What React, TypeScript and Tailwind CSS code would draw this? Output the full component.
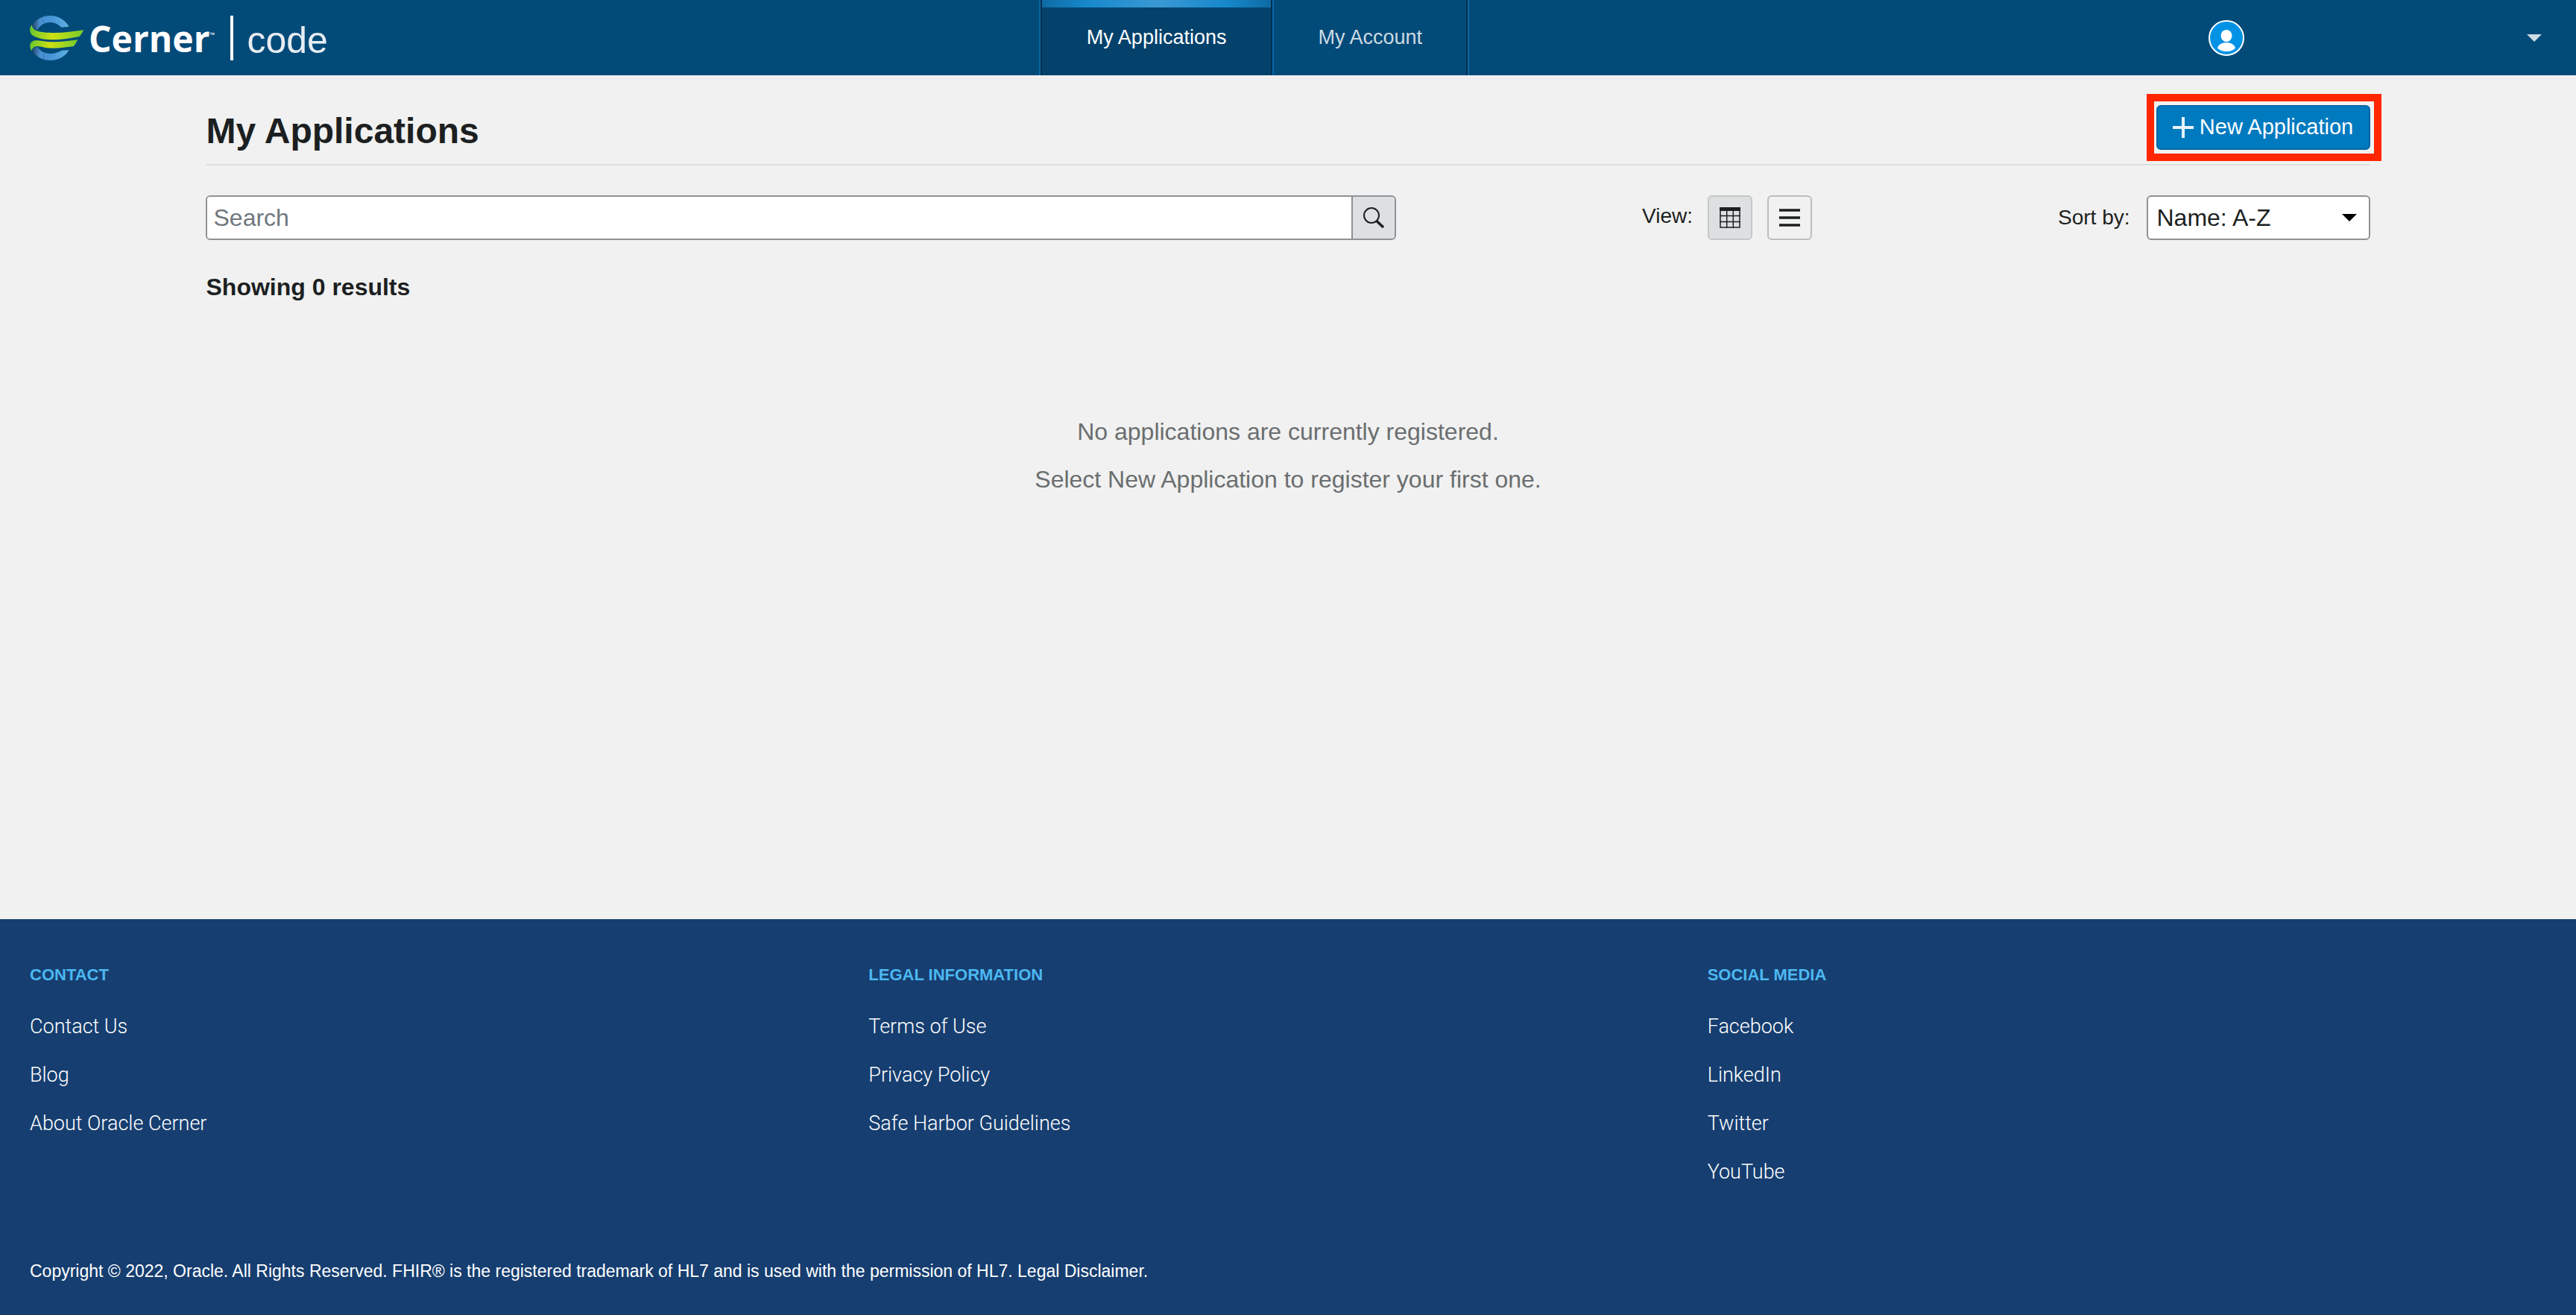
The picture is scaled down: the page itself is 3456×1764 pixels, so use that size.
import React from "react";

const footerColumns = [
  { title: "CONTACT", links: ["Contact Us", "Blog", "About Oracle Cerner"] },
  {
    title: "LEGAL INFORMATION",
    links: ["Terms of Use", "Privacy Policy", "Safe Harbor Guidelines"],
  },
  {
    title: "SOCIAL MEDIA",
    links: ["Facebook", "LinkedIn", "Twitter", "YouTube"],
  },
];

function Emblem() {
  return (
    <svg width="73" height="60" viewBox="0 0 73 60" aria-hidden="true">
      <defs>
        <linearGradient id="ring" x1="0" y1="0" x2="1" y2="0">
          <stop offset="0" stopColor="#1f3f66" />
          <stop offset="0.22" stopColor="#4a8fcf" />
          <stop offset="0.5" stopColor="#4595d9" />
          <stop offset="1" stopColor="#5fb0de" />
        </linearGradient>
        <linearGradient id="ribbon" x1="0" y1="0" x2="1" y2="0">
          <stop offset="0" stopColor="#6cc72f" />
          <stop offset="0.42" stopColor="#cfe112" />
          <stop offset="1" stopColor="#74c92c" />
        </linearGradient>
      </defs>
      <path
        d="M2.6 14C8 4.500 17 0 27.600 0C38 0 47.500 5.500 52.600 14.700L42.300 15.700C38.500 11.500 33 9 27 9C20 9 13.500 13 10 19.500Z"
        fill="url(#ring)"
      />
      <path
        d="M2.600 46C8 55.500 17 60 27.600 60C38 60 47.500 55 52.600 46.300L42.600 46.800C38.500 49.500 33 51 27 51C20 51 13.500 47.500 10 41.500Z"
        fill="url(#ring)"
      />
      <path
        d="M2.600 12.300C-0.500 16 -1.500 24 5 27.300C12 31 21 32.300 30 32.300C43 32.300 56 30 66.600 28Q70 24 72.300 19.200C58 21 45 23.300 30 23C19 22.800 9 21.500 5.500 18C3.500 16 2.800 14 2.600 12.300Z"
        fill="url(#ribbon)"
      />
      <path
        d="M2.300 47.300C-0.500 43 -1.500 35.500 6.600 33.300C13 32.500 21 35.300 30 35.300C42 35.400 54 33.500 64.300 32.300Q62 37 59 41C48 42.500 38 44 26.600 43.600C20 43.400 14 40.500 9 41C5 42 3 44 2.300 47.300Z"
        fill="url(#ribbon)"
      />
      <path d="M16 2L19.500 11M18.500 50.500L19 58.500" stroke="#2c6ba6" strokeDasharray="2 1" fill="none" />
    </svg>
  );
}

function Caret({ className }: { className: string }) {
  return (
    <svg width="20" height="10" viewBox="0 0 20 10" className={className} aria-hidden="true">
      <path d="M0 0H20L10 10Z" fill="currentColor" />
    </svg>
  );
}

function Header() {
  return (
    <header className="flex h-[101px] items-center justify-between bg-[#024a78] px-10">
      <a href="#" className="flex items-center leading-[60px]">
        <Emblem />
        <span className="ml-[6px] pt-[3px] font-['Open_Sans',sans-serif] text-[48px] font-bold text-white">Cerner</span>
        <span className="mb-2 w-7 font-['Open_Sans',sans-serif] text-[9px] leading-4 text-white">™</span>
        <span className="h-[60px] w-1 bg-white" />
        <span className="ml-[18px] pt-[6px] text-[50px] text-[#e6ecf2]">code</span>
      </a>
      <nav className="flex h-full border-x-2 border-l-[#0767a5] border-r-[#0767a5] text-[27px]">
        <a
          href="#"
          aria-current="page"
          className="relative flex items-center border-x-2 border-[#04304f] bg-[#04426c] px-[60px] text-white"
        >
          <span className="absolute inset-x-0 top-0 h-[10px] bg-[linear-gradient(to_right,#0e6ba3,#1789cd_20%,#3a99d3_50%,#1789cd_80%,#0e6ba3)]" />
          My Applications
        </a>
        <a
          href="#"
          className="flex items-center border-x-2 border-l-[#0767a5] border-r-[#04304f] px-[59px] text-[#ccdbe4]"
        >
          My Account
        </a>
      </nav>
      <button type="button" aria-label="Account menu" className="flex w-[491px] items-center justify-between pr-[6px] pl-[38px]">
        <svg width="48" height="48" viewBox="0 0 48 48" aria-hidden="true">
          <circle cx="24" cy="24" r="23" fill="#0092e4" stroke="#fff" strokeWidth="2" />
          <ellipse cx="24" cy="21" rx="7.500" ry="8" fill="#fff" />
          <path d="M12 37.500C13 33 18 30 24 30C30 30 35 33 36 37.500C33 40.500 29 42 24 42C19 42 15 40.500 12 37.500Z" fill="#fff" />
        </svg>
        <Caret className="text-[#ccdbe4]" />
      </button>
    </header>
  );
}

function Toolbar() {
  return (
    <div className="mt-10 flex items-center justify-between">
      <form role="search" className="flex h-[60px] w-[55%] overflow-hidden rounded-md border-2 border-[#8e9296]">
        <input
          type="search"
          aria-label="Search"
          placeholder="Search"
          className="min-w-0 flex-1 bg-white px-2 text-[32px] placeholder:text-[#6f777d]"
        />
        <button
          type="button"
          aria-label="Run search"
          className="flex w-[58px] items-center justify-center border-l-2 border-[#8e9296] bg-[#dedfe0]"
        >
          <svg width="28" height="28" viewBox="0 0 28 28" fill="none" stroke="#1c1f21" aria-hidden="true">
            <circle cx="11" cy="11" r="10" strokeWidth="2" />
            <path d="M18 18.500L27 27" strokeWidth="3.500" />
          </svg>
        </button>
      </form>
      <div className="flex items-center">
        <span className="mr-[20px] pb-1 text-[28px]">View:</span>
        <button
          type="button"
          aria-label="Grid view"
          aria-pressed="true"
          className="mr-5 flex size-[60px] items-center justify-center rounded-md border-2 border-[#c5c8c9] bg-[#dedfe0]"
        >
          <svg width="28" height="28" viewBox="0 0 28 28" fill="none" stroke="#1c1f21" aria-hidden="true">
            <rect width="28" height="5" fill="#1c1f21" stroke="none" />
            <path d="M1 4V27H27V4M0 11.500H28M0 19.500H28M9.700 4V28M18.300 4V28" strokeWidth="1.500" />
          </svg>
        </button>
        <button
          type="button"
          aria-label="List view"
          aria-pressed="false"
          className="flex size-[60px] items-center justify-center rounded-md border-2 border-[#bcbdbe]"
        >
          <svg width="28" height="28" viewBox="0 0 28 28" stroke="#1c1f21" strokeWidth="3.500" aria-hidden="true">
            <path d="M0 4H28M0 14H28M0 24H28" />
          </svg>
        </button>
      </div>
      <div className="flex items-center">
        <label htmlFor="sort" className="mr-[22px] text-[28px]">
          Sort by:
        </label>
        <div className="relative">
          <select
            id="sort"
            className="h-[60px] w-[300px] appearance-none rounded-md border-2 border-[#8e9296] bg-white px-3 text-[32px] text-[#1c1f21]"
          >
            <option>Name: A-Z</option>
            <option>Name: Z-A</option>
          </select>
          <Caret className="pointer-events-none absolute top-[25px] right-[18px] text-black" />
        </div>
      </div>
    </div>
  );
}

export default function App() {
  return (
    <div className="flex min-h-screen flex-col bg-[#f1f1f1] font-['Liberation_Sans',Arial,sans-serif] text-[#1c1f21]">
      <Header />
      <main className="mx-auto w-[84%] flex-1 pt-10">
        <div className="flex items-start justify-between border-b-2 border-[#dedfe0] pb-[9px]">
          <h1 className="text-[48px] leading-[70px] font-bold">My Applications</h1>
          <div className="relative">
            <button
              type="button"
              className="flex h-[60px] w-[287px] items-center justify-center gap-2 rounded-md border-2 border-[#0065a3] bg-[#007abf] text-[29px] text-white"
            >
              <svg width="28" height="28" viewBox="0 0 28 28" stroke="#e8f2f9" strokeWidth="4" aria-hidden="true">
                <path d="M14 0V28M0 14H28" />
              </svg>
              New Application
            </button>
            <span className="pointer-events-none absolute -top-[15px] -right-[15px] -bottom-[15px] -left-[13px] border-[10px] border-[#ff2600]" />
          </div>
        </div>
        <Toolbar />
        <h2 className="mt-10 text-[32px] leading-[46px] font-bold">Showing 0 results</h2>
        <div className="mt-[139px] text-center text-[32px] leading-[64px] text-[#6a6e6f]">
          <p>No applications are currently registered.</p>
          <p>Select New Application to register your first one.</p>
        </div>
      </main>
      <footer className="bg-[#163e70] px-10 pt-[60px] pb-[39px] text-white">
        <div className="grid grid-cols-3">
          {footerColumns.map((column) => (
            <section key={column.title}>
              <h3 className="text-[22px] leading-[30px] font-bold text-[#4cb8f0]">{column.title}</h3>
              <ul className="mt-[22px] font-[Roboto,sans-serif] text-[27px] leading-[65px] font-light">
                {column.links.map((link) => (
                  <li key={link}>
                    <a href="#">{link}</a>
                  </li>
                ))}
              </ul>
            </section>
          ))}
        </div>
        <p className="mt-20 text-[23px] leading-[40px]">
          Copyright © 2022, Oracle. All Rights Reserved. FHIR® is the registered trademark of HL7 and is used with the
          permission of HL7. <a href="#">Legal Disclaimer.</a>
        </p>
      </footer>
    </div>
  );
}
